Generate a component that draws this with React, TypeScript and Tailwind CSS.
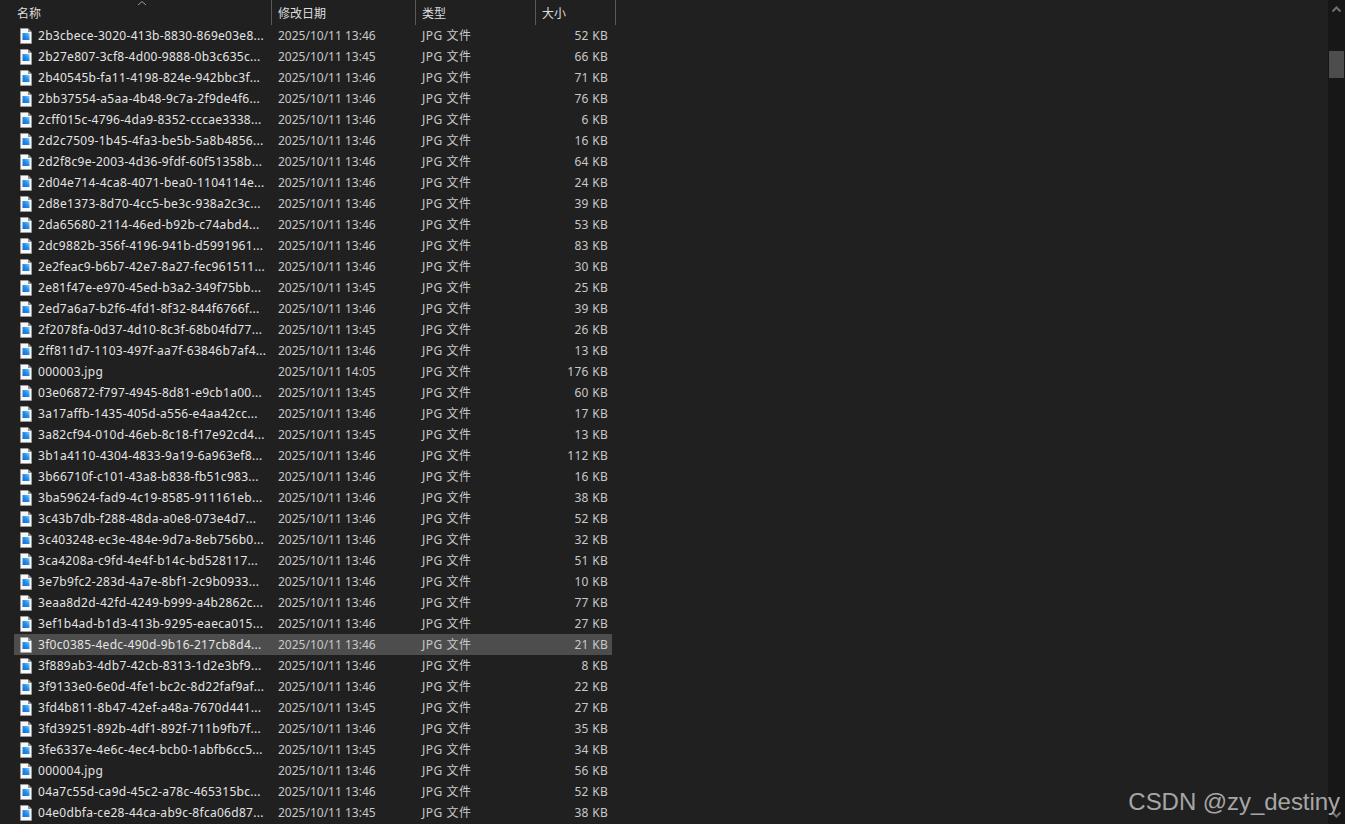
const files = [
  ["2b3cbece-3020-413b-8830-869e03e8...", "2025/10/11 13:46", "52 KB"],
  ["2b27e807-3cf8-4d00-9888-0b3c635c...", "2025/10/11 13:45", "66 KB"],
  ["2b40545b-fa11-4198-824e-942bbc3f...", "2025/10/11 13:46", "71 KB"],
  ["2bb37554-a5aa-4b48-9c7a-2f9de4f6...", "2025/10/11 13:46", "76 KB"],
  ["2cff015c-4796-4da9-8352-cccae3338...", "2025/10/11 13:46", "6 KB"],
  ["2d2c7509-1b45-4fa3-be5b-5a8b4856...", "2025/10/11 13:46", "16 KB"],
  ["2d2f8c9e-2003-4d36-9fdf-60f51358b...", "2025/10/11 13:46", "64 KB"],
  ["2d04e714-4ca8-4071-bea0-1104114e...", "2025/10/11 13:46", "24 KB"],
  ["2d8e1373-8d70-4cc5-be3c-938a2c3c...", "2025/10/11 13:46", "39 KB"],
  ["2da65680-2114-46ed-b92b-c74abd4...", "2025/10/11 13:46", "53 KB"],
  ["2dc9882b-356f-4196-941b-d5991961...", "2025/10/11 13:46", "83 KB"],
  ["2e2feac9-b6b7-42e7-8a27-fec961511...", "2025/10/11 13:46", "30 KB"],
  ["2e81f47e-e970-45ed-b3a2-349f75bb...", "2025/10/11 13:45", "25 KB"],
  ["2ed7a6a7-b2f6-4fd1-8f32-844f6766f...", "2025/10/11 13:46", "39 KB"],
  ["2f2078fa-0d37-4d10-8c3f-68b04fd77...", "2025/10/11 13:45", "26 KB"],
  ["2ff811d7-1103-497f-aa7f-63846b7af4...", "2025/10/11 13:46", "13 KB"],
  ["000003.jpg", "2025/10/11 14:05", "176 KB"],
  ["03e06872-f797-4945-8d81-e9cb1a00...", "2025/10/11 13:45", "60 KB"],
  ["3a17affb-1435-405d-a556-e4aa42cc...", "2025/10/11 13:46", "17 KB"],
  ["3a82cf94-010d-46eb-8c18-f17e92cd4...", "2025/10/11 13:45", "13 KB"],
  ["3b1a4110-4304-4833-9a19-6a963ef8...", "2025/10/11 13:46", "112 KB"],
  ["3b66710f-c101-43a8-b838-fb51c983...", "2025/10/11 13:46", "16 KB"],
  ["3ba59624-fad9-4c19-8585-911161eb...", "2025/10/11 13:46", "38 KB"],
  ["3c43b7db-f288-48da-a0e8-073e4d7...", "2025/10/11 13:46", "52 KB"],
  ["3c403248-ec3e-484e-9d7a-8eb756b0...", "2025/10/11 13:46", "32 KB"],
  ["3ca4208a-c9fd-4e4f-b14c-bd528117...", "2025/10/11 13:46", "51 KB"],
  ["3e7b9fc2-283d-4a7e-8bf1-2c9b0933...", "2025/10/11 13:46", "10 KB"],
  ["3eaa8d2d-42fd-4249-b999-a4b2862c...", "2025/10/11 13:46", "77 KB"],
  ["3ef1b4ad-b1d3-413b-9295-eaeca015...", "2025/10/11 13:46", "27 KB"],
  ["3f0c0385-4edc-490d-9b16-217cb8d4...", "2025/10/11 13:46", "21 KB"],
  ["3f889ab3-4db7-42cb-8313-1d2e3bf9...", "2025/10/11 13:46", "8 KB"],
  ["3f9133e0-6e0d-4fe1-bc2c-8d22faf9af...", "2025/10/11 13:46", "22 KB"],
  ["3fd4b811-8b47-42ef-a48a-7670d441...", "2025/10/11 13:45", "27 KB"],
  ["3fd39251-892b-4df1-892f-711b9fb7f...", "2025/10/11 13:46", "35 KB"],
  ["3fe6337e-4e6c-4ec4-bcb0-1abfb6cc5...", "2025/10/11 13:45", "34 KB"],
  ["000004.jpg", "2025/10/11 13:46", "56 KB"],
  ["04a7c55d-ca9d-45c2-a78c-465315bc...", "2025/10/11 13:46", "52 KB"],
  ["04e0dbfa-ce28-44ca-ab9c-8fca06d87...", "2025/10/11 13:45", "38 KB"],
];

const selectedRow = 29;

function FileIcon() {
  return (
    <svg width="12" height="16" viewBox="0 0 12 16" className="shrink-0">
      <defs>
        <linearGradient id="pic" x1="0" y1="1" x2="1" y2="0">
          <stop offset="0" stopColor="#1668d8" />
          <stop offset="0.55" stopColor="#2a8fe8" />
          <stop offset="1" stopColor="#7fd4f7" />
        </linearGradient>
      </defs>
      <path d="M0.5 0.5H8L11.5 4V15.5H0.5Z" fill="#f8f8f8" stroke="#a8a8a8" strokeWidth="0.6" />
      <path d="M8 0.5V4H11.5Z" fill="#8e8e8e" />
      <rect x="2.5" y="5" width="7" height="7" fill="url(#pic)" />
    </svg>
  );
}

function HeaderCell({ label, className }: { label: string; className: string }) {
  return (
    <div className={`h-[25px] shrink-0 border-r border-[#5a5a5a] pl-[6px] pt-[5px] ${className}`}>{label}</div>
  );
}

export default function App() {
  return (
    <div
      className="relative flex h-[824px] w-[1345px] overflow-hidden bg-[#202020] text-[12px] text-[#dedede]"
      style={{ fontFamily: '"Noto Sans", "Noto Sans CJK SC", sans-serif' }}
    >
      <div className="min-w-0 flex-1">
        {/* column headers */}
        <div className="relative flex h-[25px]">
          <div className="h-[25px] w-[272px] shrink-0 border-r border-[#5a5a5a] pl-[17px] pt-[5px]">名称</div>
          <HeaderCell label="修改日期" className="w-[144px]" />
          <HeaderCell label="类型" className="w-[120px]" />
          <HeaderCell label="大小" className="w-[80px]" />
          <svg width="10" height="6" viewBox="0 0 10 6" className="absolute left-[137px] top-0">
            <path d="M1 5L5 1.5L9 5" fill="none" stroke="#9a9a9a" strokeWidth="1" />
          </svg>
        </div>

        {/* file rows */}
        <div>
          {files.map(([name, date, size], i) => (
            <div
              key={name}
              className={`ml-[14px] flex h-[21px] w-[598px] items-center ${i === selectedRow ? "bg-[#4d4d4d]" : ""}`}
            >
              <div className="flex w-[258px] shrink-0 items-center pl-[6px]">
                <FileIcon />
                <span className="ml-[6px] whitespace-nowrap tracking-[0.28px] text-[#e4e4e4]">{name}</span>
              </div>
              <div className="w-[144px] shrink-0 pl-[6px] text-[#c8c8c8]">{date}</div>
              <div className="w-[120px] shrink-0 pl-[6px] tracking-[0.5px] text-[#c8c8c8]">JPG 文件</div>
              <div className="w-[72px] shrink-0 text-right tracking-[0.3px] text-[#c8c8c8]">{size}</div>
            </div>
          ))}
        </div>
      </div>

      {/* scrollbar */}
      <div className="flex w-[17px] shrink-0 flex-col items-center bg-[#171717]">
        <svg width="9" height="7" viewBox="0 0 9 7" className="mt-[6px]">
          <path d="M0.5 5.5L4.5 1.5L8.5 5.5" fill="none" stroke="#6e6e6e" strokeWidth="2" />
        </svg>
        <div className="mt-[38px] h-[27px] w-[15px] bg-[#4d4d4d]" />
        <svg width="9" height="7" viewBox="0 0 9 7" className="mt-auto mb-[6px]">
          <path d="M0.5 1.5L4.5 5.5L8.5 1.5" fill="none" stroke="#6e6e6e" strokeWidth="2" />
        </svg>
      </div>

      {/* watermark */}
      <div
        className="absolute right-[5px] top-[787px] text-[24px] leading-[30px] whitespace-nowrap text-[#a6a6a6]"
        style={{ fontFamily: '"Liberation Sans", sans-serif', letterSpacing: "-0.05px" }}
      >
        CSDN @zy_destiny
      </div>
    </div>
  );
}
